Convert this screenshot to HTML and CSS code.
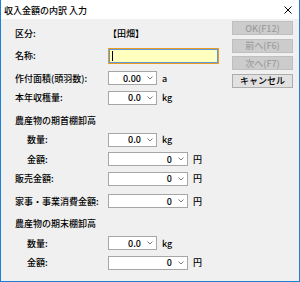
FILE: index.html
```html
<!DOCTYPE html>
<html lang="ja">
<head>
<meta charset="UTF-8">
<title>収入金額の内訳 入力</title>
<link rel="stylesheet" href="styles.css">
</head>
<body>
<div class="window">
    <div class="titlebar">
        <span class="title">収入金額の内訳 入力</span>
        <svg class="close" width="8" height="8" viewBox="0 0 8 8"><path d="M0.5 0.5L7.5 7.5M7.5 0.5L0.5 7.5" stroke="#000" stroke-width="1"/></svg>
    </div>
    <div class="content">
        <div class="form">
            <div class="row">
                <span class="label">区分:</span>
                <span class="value">【田畑】</span>
            </div>
            <div class="row sp">
                <span class="label">名称:</span>
                <div class="text-input"><span class="caret"></span></div>
            </div>
            <div class="row sp">
                <span class="label">作付面積(頭羽数):</span>
                <div class="combo"><span>0.00</span><svg width="6" height="4" viewBox="0 0 6 4"><polyline points="0.5,0.5 3,3 5.5,0.5" fill="none" stroke="#7a7a7a"/></svg></div>
                <span class="unit">a</span>
            </div>
            <div class="row">
                <span class="label">本年収穫量:</span>
                <div class="combo"><span>0.0</span><svg width="6" height="4" viewBox="0 0 6 4"><polyline points="0.5,0.5 3,3 5.5,0.5" fill="none" stroke="#7a7a7a"/></svg></div>
                <span class="unit">kg</span>
            </div>
            <div class="row sp heading">農産物の期首棚卸高</div>
            <div class="row">
                <span class="label sub">数量:</span>
                <div class="combo"><span>0.0</span><svg width="6" height="4" viewBox="0 0 6 4"><polyline points="0.5,0.5 3,3 5.5,0.5" fill="none" stroke="#7a7a7a"/></svg></div>
                <span class="unit">kg</span>
            </div>
            <div class="row">
                <span class="label sub">金額:</span>
                <div class="combo wide"><span>0</span><svg width="6" height="4" viewBox="0 0 6 4"><polyline points="0.5,0.5 3,3 5.5,0.5" fill="none" stroke="#7a7a7a"/></svg></div>
                <span class="unit">円</span>
            </div>
            <div class="row">
                <span class="label">販売金額:</span>
                <div class="combo wide"><span>0</span><svg width="6" height="4" viewBox="0 0 6 4"><polyline points="0.5,0.5 3,3 5.5,0.5" fill="none" stroke="#7a7a7a"/></svg></div>
                <span class="unit">円</span>
            </div>
            <div class="row sp">
                <span class="label">家事・事業消費金額:</span>
                <div class="combo wide"><span>0</span><svg width="6" height="4" viewBox="0 0 6 4"><polyline points="0.5,0.5 3,3 5.5,0.5" fill="none" stroke="#7a7a7a"/></svg></div>
                <span class="unit">円</span>
            </div>
            <div class="row sp heading">農産物の期末棚卸高</div>
            <div class="row">
                <span class="label sub">数量:</span>
                <div class="combo"><span>0.0</span><svg width="6" height="4" viewBox="0 0 6 4"><polyline points="0.5,0.5 3,3 5.5,0.5" fill="none" stroke="#7a7a7a"/></svg></div>
                <span class="unit">kg</span>
            </div>
            <div class="row">
                <span class="label sub">金額:</span>
                <div class="combo wide"><span>0</span><svg width="6" height="4" viewBox="0 0 6 4"><polyline points="0.5,0.5 3,3 5.5,0.5" fill="none" stroke="#7a7a7a"/></svg></div>
                <span class="unit">円</span>
            </div>
        </div>
        <div class="buttons">
            <button class="btn" disabled>OK(F12)</button>
            <button class="btn" disabled>前へ(F6)</button>
            <button class="btn" disabled>次へ(F7)</button>
            <button class="btn cancel">キャンセル</button>
        </div>
    </div>
</div>
</body>
</html>
```
FILE: styles.css
```css
body {
    margin: 0;
    font-family: "Noto Sans CJK JP", "Noto Sans", sans-serif;
    font-size: 9px;
    font-weight: 500;
    line-height: 1;
    color: #000;
    background-color: #fff;
}
.window {
    width: 300px;
    height: 282px;
    box-sizing: border-box;
    border-left: 1px solid #1c7fd6;
    border-right: 1px solid #1c7fd6;
    border-bottom: 1px solid #1c7fd6;
    background-color: #f0f0f0;
    display: flex;
    flex-direction: column;
}
.titlebar {
    height: 19px;
    background-color: #fff;
    display: flex;
    align-items: center;
    justify-content: space-between;
    padding: 1px 7px 0 3px;
    box-sizing: border-box;
}
.content {
    flex: 1;
    display: flex;
}
.form {
    flex: 1;
    padding: 4.5px 0 0 14px;
}
.row {
    height: 19.5px;
    display: flex;
    align-items: center;
}
.row.sp {
    margin-top: 3px;
}
.label {
    width: 93px;
    flex: none;
}
.label.sub {
    padding-left: 12px;
    box-sizing: border-box;
}
.text-input {
    width: 111px;
    height: 16px;
    box-sizing: border-box;
    background-color: #ffffc0;
    border: 1px solid #eb9a24;
    box-shadow: inset 0 0 0 1px #5b9bd8;
    display: flex;
    align-items: center;
    padding-left: 3px;
}
.caret {
    width: 1px;
    height: 10px;
    background-color: #000;
}
.combo {
    width: 49px;
    height: 14px;
    box-sizing: border-box;
    background-color: #fff;
    border: 1px solid #a6a6a6;
    display: flex;
    align-items: center;
    justify-content: flex-end;
    gap: 6px;
    padding-right: 3px;
}
.combo.wide {
    width: 80px;
}
.unit {
    margin-left: 5px;
}
.buttons {
    width: 61px;
    margin-right: 6px;
    padding-top: 2px;
    display: flex;
    flex-direction: column;
    gap: 3.5px;
}
.btn {
    height: 14px;
    padding: 0;
    font-family: inherit;
    font-size: 9px;
    font-weight: 500;
    line-height: 1;
    background-color: #cccccc;
    border: 1px solid #bfbfbf;
    color: #9d9d9d;
}
.btn.cancel {
    background-color: #e1e1e1;
    border-color: #adadad;
    color: #000;
}
```
